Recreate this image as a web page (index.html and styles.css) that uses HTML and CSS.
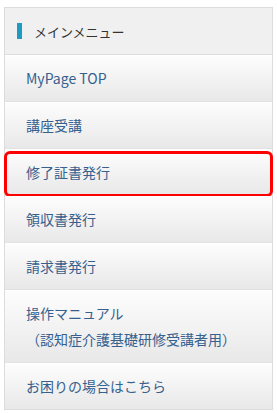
FILE: index.html
```html
<!DOCTYPE html>
<html lang="ja">
<head>
  <meta charset="UTF-8">
  <meta name="viewport" content="width=device-width, initial-scale=1.0">
  <title>メインメニュー</title>
  <link rel="stylesheet" href="styles.css">
</head>
<body>

<div id="side-menu">
  <div class="menu-title">メインメニュー</div>
  <ul class="menu-list">
    <li class="menu-item"><a href="#">MyPage TOP</a></li>
    <li class="menu-item"><a href="#">講座受講</a></li>
    <li class="menu-item marked"><a href="#">修了証書発行</a></li>
    <li class="menu-item"><a href="#">領収書発行</a></li>
    <li class="menu-item"><a href="#">請求書発行</a></li>
    <li class="menu-item"><a href="#">操作マニュアル<br>（認知症介護基礎研修受講者用）</a></li>
    <li class="menu-item"><a href="#">お困りの場合はこちら</a></li>
  </ul>
</div>

</body>
</html>
```

FILE: styles.css
```css
body {
  margin: 0;
  background-color: #fff;
  font-family: 'Noto Sans CJK JP', sans-serif;
}

#side-menu {
  margin: 7px 4px;
  border: 1px solid #dcdcdc;
  background-color: #f0f0f0;
}

.menu-title {
  display: flex;
  align-items: center;
  height: 46px;
  padding-left: 12px;
  font-size: 13px;
  color: #333;
  background-color: #f0f0f0;
  border-bottom: 1px solid #dedede;
}

.menu-title::before {
  content: '';
  width: 5px;
  height: 16px;
  margin-right: 12px;
  background-color: #1a9cc4;
}

.menu-list {
  list-style: none;
  margin: 0;
  padding: 0;
}

.menu-item {
  position: relative;
  border-top: 1px solid #fff;
  border-bottom: 1px solid #e2e2e2;
  background: linear-gradient(#fdfdfd, #e8e8e8);
}

.menu-item:last-child {
  border-bottom: none;
}

.menu-item a {
  display: block;
  padding: 9px 21px 10px;
  font-size: 14px;
  line-height: 26px;
  color: #36608e;
  text-decoration: none;
}

.menu-item.marked::after {
  content: '';
  position: absolute;
  top: 1px;
  left: -1px;
  right: -1px;
  bottom: -2px;
  border: 3px solid #f00;
  border-radius: 6px;
  pointer-events: none;
}
```
